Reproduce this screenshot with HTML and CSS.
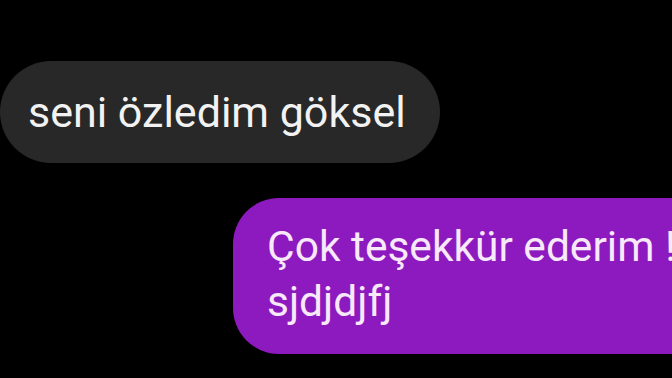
FILE: index.html
```html
<!DOCTYPE html>
<html lang="en">
  <head>
    <meta charset="UTF-8" />
    <meta name="viewport" content="width=device-width, initial-scale=1.0" />
    <title>Sohbet</title>
    <link rel="stylesheet" href="styles.css">
  </head>
  <body>
    <div class="chat">
      <div class="msg incoming">seni özledim göksel</div>
      <div class="msg outgoing">Çok teşekkür ederim !<br />sjdjdjfj</div>
    </div>
  </body>
</html>
```

FILE: styles.css
```css
html,
body {
  margin: 0;
  height: 100%;
  background-color: #000000;
  overflow: hidden;
}
.chat {
  display: flex;
  flex-direction: column;
  align-items: flex-start;
  height: 100%;
  padding-top: 61px;
  box-sizing: border-box;
  overflow: hidden;
  font-family: Roboto, "Noto Sans", Arial, sans-serif;
}
.msg {
  font-size: 43px;
  white-space: nowrap;
}
.incoming {
  box-sizing: border-box;
  width: 440px;
  height: 102px;
  display: flex;
  align-items: center;
  padding-left: 28px;
  background-color: #282828;
  color: #f2f2f2;
  border-radius: 51px;
}
.outgoing {
  flex-shrink: 0;
  margin-top: 35px;
  margin-left: 233px;
  width: 520px;
  box-sizing: border-box;
  padding: 21px 0 25px 34px;
  font-size: 42.5px;
  line-height: 55px;
  background-color: #8d1abf;
  color: #f7e8fa;
  border-radius: 46px;
}
```
